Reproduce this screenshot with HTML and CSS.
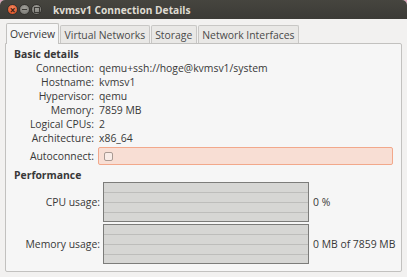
FILE: index.html
```html
<!DOCTYPE html>
<html lang="en">
<head>
    <meta charset="UTF-8">
    <title>kvmsv1 Connection Details</title>
    <link rel="stylesheet" href="styles.css">
</head>
<body>
    <div class="window">
        <div class="titlebar">
            <div class="buttons">
                <span class="btn close">&times;</span>
                <span class="btn min"></span>
                <span class="btn max"></span>
            </div>
            <div class="title">kvmsv1 Connection Details</div>
        </div>

        <div class="content">
            <div class="tabs">
                <div class="tab active">Overview</div>
                <div class="tab">Virtual Networks</div>
                <div class="tab">Storage</div>
                <div class="tab">Network Interfaces</div>
            </div>

            <div class="panel">
                <div class="section-title">Basic details</div>
                <div class="details">
                    <div class="label">Connection:</div>
                    <div class="value">qemu+ssh://hoge@kvmsv1/system</div>
                    <div class="label">Hostname:</div>
                    <div class="value">kvmsv1</div>
                    <div class="label">Hypervisor:</div>
                    <div class="value">qemu</div>
                    <div class="label">Memory:</div>
                    <div class="value">7859 MB</div>
                    <div class="label">Logical CPUs:</div>
                    <div class="value">2</div>
                    <div class="label">Architecture:</div>
                    <div class="value">x86_64</div>
                    <div class="label auto-label">Autoconnect:</div>
                    <div class="auto-box"><span class="checkbox"></span></div>
                </div>

                <div class="section-title perf-title">Performance</div>
                <div class="perf">
                    <div class="label">CPU usage:</div>
                    <div class="graph"></div>
                    <div class="value">0 %</div>
                    <div class="label">Memory usage:</div>
                    <div class="graph"></div>
                    <div class="value">0 MB of 7859 MB</div>
                </div>
            </div>
        </div>
    </div>
</body>
</html>
```

FILE: styles.css
```css
body {
    margin: 0;
    background-color: #d9a3b8;
    font-family: 'Open Sans', sans-serif;
    font-size: 10.4px;
    color: #383838;
}

.window {
    width: 407px;
    height: 277px;
    background-color: #f2f1f0;
    border-radius: 5px 5px 0 0;
    overflow: hidden;
    display: flex;
    flex-direction: column;
}

.titlebar {
    height: 19px;
    background: linear-gradient(#46453f, #3b3a36);
    display: flex;
    align-items: center;
    padding-left: 7px;
}

.buttons {
    display: flex;
    gap: 1px;
    margin-right: 11px;
}

.btn {
    width: 11px;
    height: 11px;
    border-radius: 50%;
    background: radial-gradient(circle at 50% 35%, #a09f99, #74736e);
    box-sizing: border-box;
    border: 1px solid #34332f;
    display: flex;
    justify-content: center;
    align-items: center;
}

.btn.close {
    background: radial-gradient(circle at 50% 35%, #f4875f, #d9491d);
    color: #3a1a10;
    font-size: 10px;
    line-height: 1;
    font-weight: bold;
}

.btn.min::before {
    content: "";
    width: 5px;
    height: 1px;
    background-color: #3b3a36;
}

.btn.max::before {
    content: "";
    width: 4px;
    height: 4px;
    border: 1px solid #3b3a36;
}

.title {
    color: #dfdbd2;
    font-weight: bold;
    font-size: 10.2px;
}

.content {
    flex: 1;
    padding: 4px 5px 0 5px;
    display: flex;
    flex-direction: column;
}

.tabs {
    display: flex;
    align-items: flex-end;
    height: 20px;
    padding-left: 1px;
}

.tab {
    height: 17px;
    padding: 0 3.5px;
    margin-right: 1px;
    background-color: #e9e8e6;
    border: 1px solid #c8c7c5;
    border-bottom: none;
    border-radius: 2px 2px 0 0;
    display: flex;
    align-items: center;
    color: #4a4a4a;
}

.tab.active {
    height: 20px;
    padding: 0 3px;
    background-color: #f6f6f6;
    border-color: #c2c1bf;
    color: #383838;
    position: relative;
    top: 1px;
}

.panel {
    height: 224px;
    background-color: #f6f6f6;
    border: 1px solid #c2c1bf;
    border-radius: 0 2px 2px 2px;
    padding: 3px 8px 0 8px;
}

.section-title {
    font-weight: bold;
    height: 14px;
    line-height: 14px;
}

.details {
    display: grid;
    grid-template-columns: 80px 1fr;
    column-gap: 5px;
    grid-auto-rows: 14px;
    line-height: 14px;
}

.label {
    text-align: right;
}

.auto-label,
.auto-box {
    margin-top: 2px;
    height: 18px;
}

.auto-label {
    line-height: 18px;
}

.auto-box {
    margin-left: -1px;
    box-sizing: border-box;
    background-color: #f8ded4;
    border: 1px solid #f2a88b;
    border-radius: 2px;
    display: flex;
    align-items: center;
    padding-left: 5px;
}

.checkbox {
    width: 7px;
    height: 7px;
    border: 1px solid #a99a93;
    border-radius: 2px;
    background-color: #f9ece7;
}

.perf-title {
    margin-top: 9px;
}

.perf {
    display: grid;
    grid-template-columns: 86px 206px 1fr;
    column-gap: 3px;
    row-gap: 2px;
    align-items: center;
}

.perf .value {
    padding-left: 1px;
    white-space: nowrap;
}

.graph {
    height: 38px;
    border: 1px solid #7c7c7a;
    background: repeating-linear-gradient(to bottom, #d6d6d4 0 9px, #bdbdbb 9px 10px);
}
```
